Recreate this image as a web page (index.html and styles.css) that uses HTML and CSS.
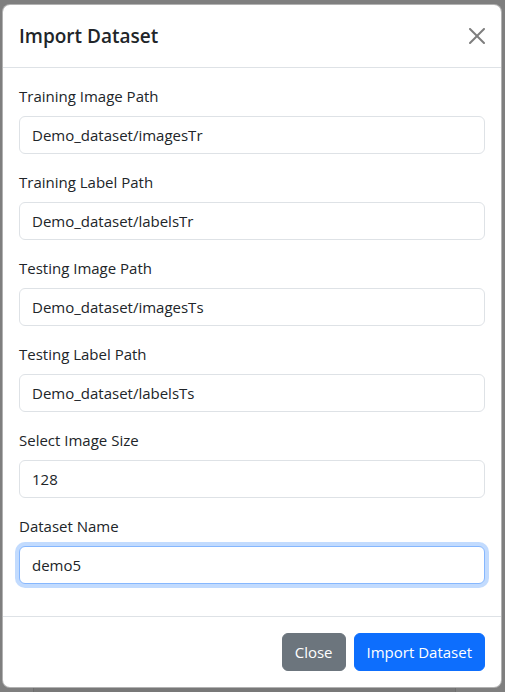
FILE: index.html
```html
<!DOCTYPE html>
<html lang="en">
<head>
<meta charset="utf-8">
<title>Import Dataset</title>
<link rel="stylesheet" href="styles.css">
</head>
<body>
<div class="modal">
  <div class="modal-header">
    <h5 class="modal-title">Import Dataset</h5>
    <button type="button" class="btn-close" aria-label="Close">
      <svg viewBox="0 0 16 16" width="16" height="16" aria-hidden="true"><path d="M.293.293a1 1 0 0 1 1.414 0L8 6.586 14.293.293a1 1 0 1 1 1.414 1.414L9.414 8l6.293 6.293a1 1 0 0 1-1.414 1.414L8 9.414l-6.293 6.293a1 1 0 0 1-1.414-1.414L6.586 8 .293 1.707a1 1 0 0 1 0-1.414z"/></svg>
    </button>
  </div>
  <div class="modal-body">
    <div class="field">
      <label class="form-label" for="f1">Training Image Path</label>
      <input class="form-control" id="f1" type="text" value="Demo_dataset/imagesTr">
    </div>
    <div class="field">
      <label class="form-label" for="f2">Training Label Path</label>
      <input class="form-control" id="f2" type="text" value="Demo_dataset/labelsTr">
    </div>
    <div class="field">
      <label class="form-label" for="f3">Testing Image Path</label>
      <input class="form-control" id="f3" type="text" value="Demo_dataset/imagesTs">
    </div>
    <div class="field">
      <label class="form-label" for="f4">Testing Label Path</label>
      <input class="form-control" id="f4" type="text" value="Demo_dataset/labelsTs">
    </div>
    <div class="field">
      <label class="form-label" for="f5">Select Image Size</label>
      <input class="form-control" id="f5" type="text" value="128">
    </div>
    <div class="field">
      <label class="form-label" for="f6">Dataset Name</label>
      <input class="form-control focused" id="f6" type="text" value="demo5">
    </div>
  </div>
  <div class="modal-footer">
    <button type="button" class="btn btn-secondary">Close</button>
    <button type="button" class="btn btn-primary">Import Dataset</button>
  </div>
</div>
<div class="peek"></div>
</body>
</html>
```

FILE: styles.css
```css
* { box-sizing: border-box; }
html, body { margin: 0; padding: 0; }
body {
  background: #7f7f7f;
  font-family: "Open Sans", "Noto Sans", sans-serif;
  font-size: 15px;
  line-height: 24px;
  color: #212529;
  height: 692px;
  overflow: hidden;
}
.modal {
  margin: 4px 3px 0 2px;
  background: #fff;
  border: 1px solid rgba(0,0,0,0.3);
  border-radius: 8px;
}
.modal-header {
  display: flex;
  align-items: center;
  justify-content: space-between;
  padding: 16px;
  border-bottom: 1px solid #dee2e6;
}
.modal-title {
  margin: 0;
  font-size: 19px;
  font-weight: 600;
  line-height: 30px;
}
.btn-close {
  width: 32px;
  height: 32px;
  padding: 8px;
  margin: -8px -8px -8px auto;
  border: 0;
  background: transparent;
  display: flex;
  align-items: center;
  justify-content: center;
}
.btn-close svg { fill: #000; opacity: 0.5; display: block; }
.modal-body { padding: 16px; }
.field { margin-bottom: 16px; }
.form-label {
  display: block;
  margin-bottom: 8px;
  line-height: 24px;
}
.form-control {
  display: block;
  width: 100%;
  height: 38px;
  padding: 6px 12px;
  font: inherit;
  color: #212529;
  border: 1px solid #dee2e6;
  border-radius: 6px;
  background: #fff;
  outline: none;
}
.form-control.focused {
  border-color: #86b7fe;
  box-shadow: 0 0 0 4px rgba(13,110,253,0.25);
}
.modal-footer {
  display: flex;
  justify-content: flex-end;
  align-items: center;
  padding: 12px;
  border-top: 1px solid #dee2e6;
}
.btn {
  margin: 4px;
  height: 38px;
  padding: 6px 12px;
  font: inherit;
  border: 1px solid transparent;
  border-radius: 6px;
  color: #fff;
}
.btn-secondary { background: #6c757d; border-color: #6c757d; }
.btn-primary { background: #0d6efd; border-color: #0d6efd; }
.peek {
  margin: 0 49px 0 33px;
  height: 10px;
  background: #787878;
  border-left: 1px solid #6e6e6e;
  border-right: 1px solid #6e6e6e;
}
```
